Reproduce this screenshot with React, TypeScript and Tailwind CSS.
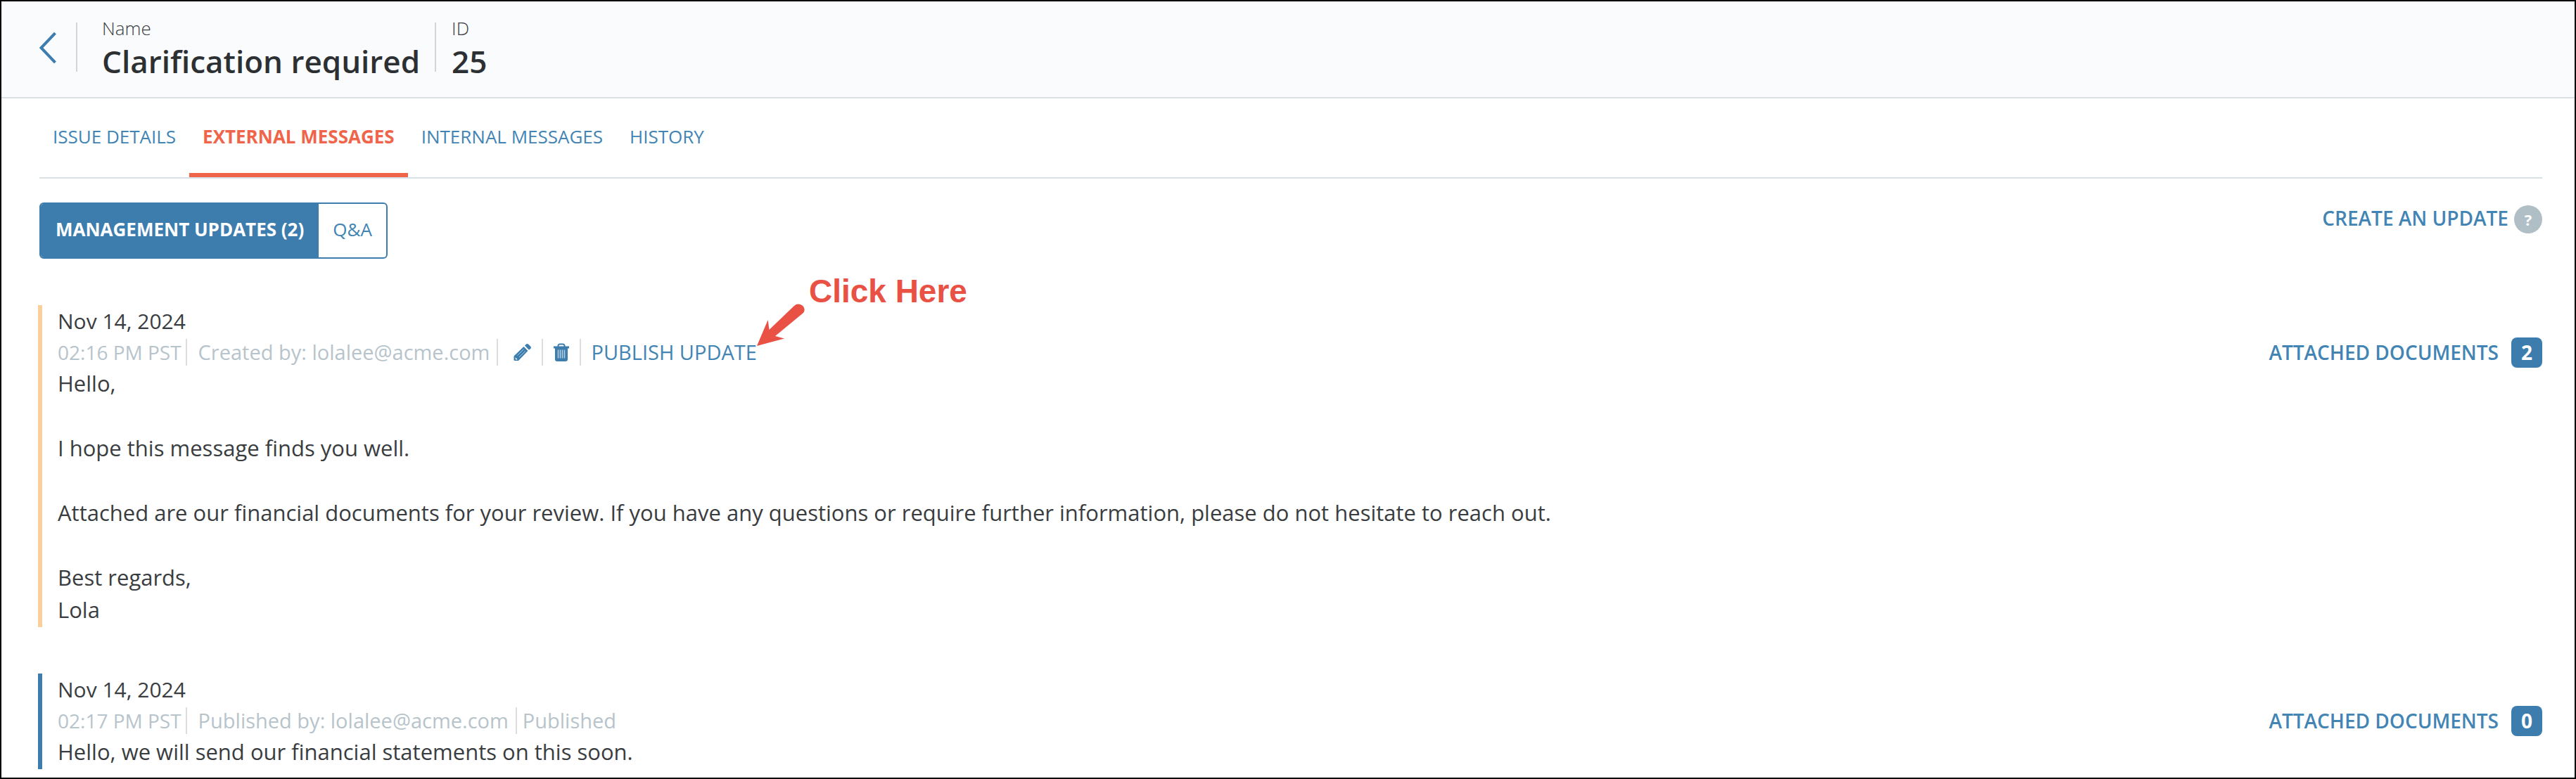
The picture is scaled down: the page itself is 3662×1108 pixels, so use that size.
import type { ReactNode } from "react";

function Divider({ className = "" }: { className?: string }) {
  return <span aria-hidden="true" className={`h-[38px] w-[2px] shrink-0 bg-[#dddddd] ${className}`} />;
}

function PencilIcon() {
  return (
    <svg viewBox="0 0 26 26" className="size-[26px]" fill="currentColor" aria-hidden="true">
      <path d="M0.500 24V18.500L14.500 5L20.500 11L7 25H2Q0.500 25 0.500 24z" />
      <path d="M16 3.500L18.500 1.200Q19.800 0.500 21 1.500L24.500 5Q25.500 6.500 24.500 7.500L22 9.800z" />
      <path d="M5.500 17.500L14.500 8.700M8 20L17 11.200" stroke="#a9c8de" strokeWidth="1" fill="none" />
      <path d="M2.600 20.300L5.800 23.200L3 23.600z" fill="#fff" />
    </svg>
  );
}

function TrashIcon() {
  return (
    <svg viewBox="0 0 24 26" className="h-[26px] w-[24px]" aria-hidden="true">
      <path d="M7.500 5V3.500Q8 1.500 10 1.500h4Q16 1.500 16.500 3.500V5" fill="none" stroke="currentColor" strokeWidth="2" />
      <path d="M1 4.500h22v3H1zM3 7h18v16q0 3-3 3H6q-3 0-3-3z" fill="currentColor" />
      <path d="M7.500 9.500v12M10.500 9.500v12M13.500 9.500v12M16.500 9.500v12" stroke="#b5cfe2" strokeWidth="1.500" />
    </svg>
  );
}

function Attached({ count }: { count: number }) {
  return (
    <a href="#documents" className="flex items-center gap-[18px] text-[28px] leading-[42px] font-semibold text-[#4284b4]">
      ATTACHED DOCUMENTS
      <span className="flex h-[43px] w-11 items-center justify-center rounded-lg bg-[#3d7dae] font-bold text-white">
        {count}
      </span>
    </a>
  );
}

function Message({
  accent,
  meta,
  count,
  children,
}: {
  accent: string;
  meta: ReactNode;
  count: number;
  children: ReactNode;
}) {
  return (
    <article className={`-ml-[2px] border-l-[6px] pb-[2px] pl-[22px] ${accent}`}>
      <h2 className="text-[30px] leading-[46px]">Nov 14, 2024</h2>
      <div className="flex h-[42px] items-center justify-between">
        <div className="flex items-center text-[28px] leading-[42px] text-[#b7c4cb]">{meta}</div>
        <Attached count={count} />
      </div>
      <div className="flex flex-col gap-[46px] text-[31px] leading-[46px]">{children}</div>
    </article>
  );
}

const tabs = ["ISSUE DETAILS", "EXTERNAL MESSAGES", "INTERNAL MESSAGES", "HISTORY"];

export default function App() {
  return (
    <div className="min-h-screen border-2 border-black bg-white font-['Open_Sans',sans-serif] text-[#3a3d3f]">
      <header className="flex h-[138px] items-start border-b-2 border-[#d9e0e4] bg-[#fafbfd] pt-[30px] pl-[54px]">
        <button type="button" aria-label="Back" className="mt-[14px] mr-7 text-[#3d7dae]">
          <svg viewBox="0 0 24 44" className="h-[44px] w-[24px]" fill="none" stroke="currentColor" strokeWidth="4" aria-hidden="true">
            <path d="M22.500 1L2.500 22l20 21" />
          </svg>
        </button>
        <div className="h-[70px] border-l-2 border-[#d3d6d9] pr-[21px] pl-[35px]">
          <div className="-mt-[10px] text-[26px] leading-[36px] font-light">Name</div>
          <h1 className="text-[44px] leading-[58px] font-semibold text-[#2d3033]">Clarification required</h1>
        </div>
        <div className="h-[70px] border-l-2 border-[#d3d6d9] pl-[22px]">
          <div className="-mt-[10px] text-[26px] leading-[36px] font-light">ID</div>
          <div className="text-[44px] leading-[58px] font-semibold text-[#2d3033]">25</div>
        </div>
      </header>

      <main className="pr-[46px] pl-[54px]">
        <nav className="flex h-[114px] border-b-2 border-[#d9e0e4]">
          {tabs.map((tab) => (
            <a
              key={tab}
              href="#tab"
              className={
                tab === "EXTERNAL MESSAGES"
                  ? "border-b-[6px] border-[#f0644a] px-[19px] pt-9 text-[26px] leading-[36px] font-bold text-[#f0644a]"
                  : "px-[19px] pt-9 text-[26px] leading-[36px] text-[#4284b4]"
              }
            >
              {tab}
            </a>
          ))}
        </nav>

        <div className="mt-[34px] flex items-start justify-between">
          <div className="flex h-20 overflow-hidden rounded-md border-2 border-[#3d7dae] text-[26px] leading-[36px]">
            <button type="button" className="bg-[#3d7dae] px-[21px] pb-1 font-bold text-white">
              MANAGEMENT UPDATES (2)
            </button>
            <button type="button" className="px-5 pb-1 text-[#4284b4]">
              Q&amp;A
            </button>
          </div>
          <div className="mt-1 flex items-start gap-2">
            <a href="#create" className="text-[28px] leading-[36px] font-semibold text-[#4284b4]">
              CREATE AN UPDATE
            </a>
            <button
              type="button"
              aria-label="Help"
              className="flex size-10 items-center justify-center rounded-full bg-[#b0bec5] text-[22px] leading-[30px] font-bold text-white"
            >
              ?
            </button>
          </div>
        </div>

        <section className="mt-[66px] flex flex-col gap-[66px]">
          <Message
            accent="border-[#f9cf9c]"
            count={2}
            meta={
              <>
                <span>02:16 PM PST</span>
                <Divider className="mr-4 ml-[6px]" />
                <span className="text-[29px]">Created by: lolalee@acme.com</span>
                <Divider className="mr-[22px] ml-[10px]" />
                <button type="button" aria-label="Edit" className="text-[#3d7dae]">
                  <PencilIcon />
                </button>
                <Divider className="mx-[14px]" />
                <button type="button" aria-label="Delete" className="text-[#3d7dae]">
                  <TrashIcon />
                </button>
                <Divider className="mx-[14px]" />
                <span className="relative flex">
                  <button type="button" className="text-[29px] text-[#4284b4]">
                    PUBLISH UPDATE
                  </button>
                  <span className="absolute bottom-[30px] left-full flex items-end text-[#e95145]">
                    <svg viewBox="0 0 68 60" className="h-[60px] w-[68px] shrink-0" fill="currentColor" aria-hidden="true">
                      <path d="M0 60L15.700 23L17.500 37L53 3C60-4 72 5 66 13L26 46L39 49.500z" />
                    </svg>
                    <span className="mb-[52px] ml-[6px] font-['Liberation_Sans',sans-serif] text-[46px] leading-[52px] font-bold whitespace-nowrap">
                      Click Here
                    </span>
                  </span>
                </span>
              </>
            }
          >
            <p>Hello,</p>
            <p>I hope this message finds you well.</p>
            <p>
              Attached are our financial documents for your review. If you have any questions or require further
              information, please do not hesitate to reach out.
            </p>
            <p>
              Best regards,
              <br />
              Lola
            </p>
          </Message>
          <Message
            accent="border-[#3d7dae]"
            count={0}
            meta={
              <>
                <span>02:17 PM PST</span>
                <Divider className="mr-4 ml-[6px]" />
                <span className="text-[29px]">Published by: lolalee@acme.com</span>
                <Divider className="mr-2 ml-[10px]" />
                <span className="text-[29px]">Published</span>
              </>
            }
          >
            <p>Hello, we will send our financial statements on this soon.</p>
          </Message>
        </section>
      </main>
    </div>
  );
}
